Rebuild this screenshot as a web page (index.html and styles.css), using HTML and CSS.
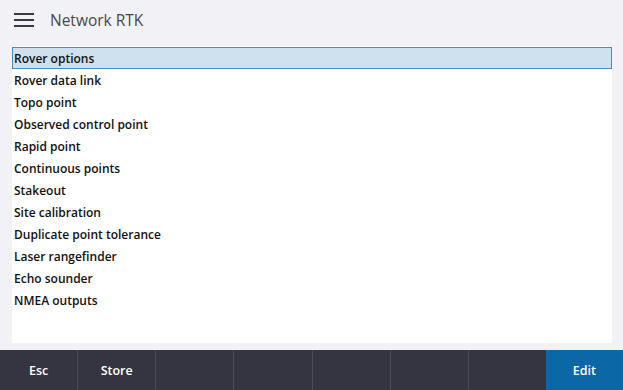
FILE: index.html
```html
<!DOCTYPE html>
<html lang="en">
<head>
    <meta charset="UTF-8">
    <meta name="viewport" content="width=device-width, initial-scale=1.0">
    <title>Network RTK</title>
    <link rel="stylesheet" href="styles.css">
</head>
<body>

<!-- Title bar -->
<div class="header">
    <svg class="menu" width="20" height="14" viewBox="0 0 20 14">
        <rect x="0" y="0" width="20" height="2" fill="#3a3a44"/>
        <rect x="0" y="6" width="20" height="2" fill="#3a3a44"/>
        <rect x="0" y="12" width="20" height="2" fill="#3a3a44"/>
    </svg>
    <span class="title">Network RTK</span>
</div>

<!-- Survey style options -->
<div class="panel">
    <div class="item selected">Rover options</div>
    <div class="item">Rover data link</div>
    <div class="item">Topo point</div>
    <div class="item">Observed control point</div>
    <div class="item">Rapid point</div>
    <div class="item">Continuous points</div>
    <div class="item">Stakeout</div>
    <div class="item">Site calibration</div>
    <div class="item">Duplicate point tolerance</div>
    <div class="item">Laser rangefinder</div>
    <div class="item">Echo sounder</div>
    <div class="item">NMEA outputs</div>
</div>

<!-- Softkeys -->
<div class="footer">
    <div class="key">Esc</div>
    <div class="key">Store</div>
    <div class="key"></div>
    <div class="key"></div>
    <div class="key"></div>
    <div class="key"></div>
    <div class="key"></div>
    <div class="key primary">Edit</div>
</div>

</body>
</html>
```

FILE: styles.css
```css
html, body {
    margin: 0;
    height: 100%;
}
body {
    font-family: "Open Sans", "Noto Sans", sans-serif;
    background-color: #f2f2f6;
    display: flex;
    flex-direction: column;
    overflow: hidden;
}
.header {
    height: 40px;
    display: flex;
    align-items: center;
    padding-left: 14px;
    flex-shrink: 0;
}
.menu {
    margin-right: 16px;
}
.title {
    font-size: 15.5px;
    color: #47474f;
}
.panel {
    flex: 1;
    background-color: #fff;
    margin: 6px 11px 7px 12px;
    padding-top: 1px;
}
.item {
    height: 22px;
    line-height: 21px;
    padding-top: 1px;
    font-size: 12px;
    font-weight: 600;
    color: #111;
    padding-left: 2px;
    box-sizing: border-box;
}
.selected {
    background-color: #cfe1ef;
    border: 1px solid #4a8ac2;
    line-height: 19px;
    padding-left: 1px;
}
.footer {
    height: 40px;
    flex-shrink: 0;
    display: flex;
    background-color: #353441;
}
.key {
    flex: 1;
    border-left: 1px solid #4a4957;
    color: #fff;
    font-size: 12.5px;
    font-weight: 600;
    display: flex;
    align-items: center;
    justify-content: center;
}
.key:first-child {
    border-left: none;
}
.key.primary {
    background-color: #0b67a5;
    border-left: none;
}
```
